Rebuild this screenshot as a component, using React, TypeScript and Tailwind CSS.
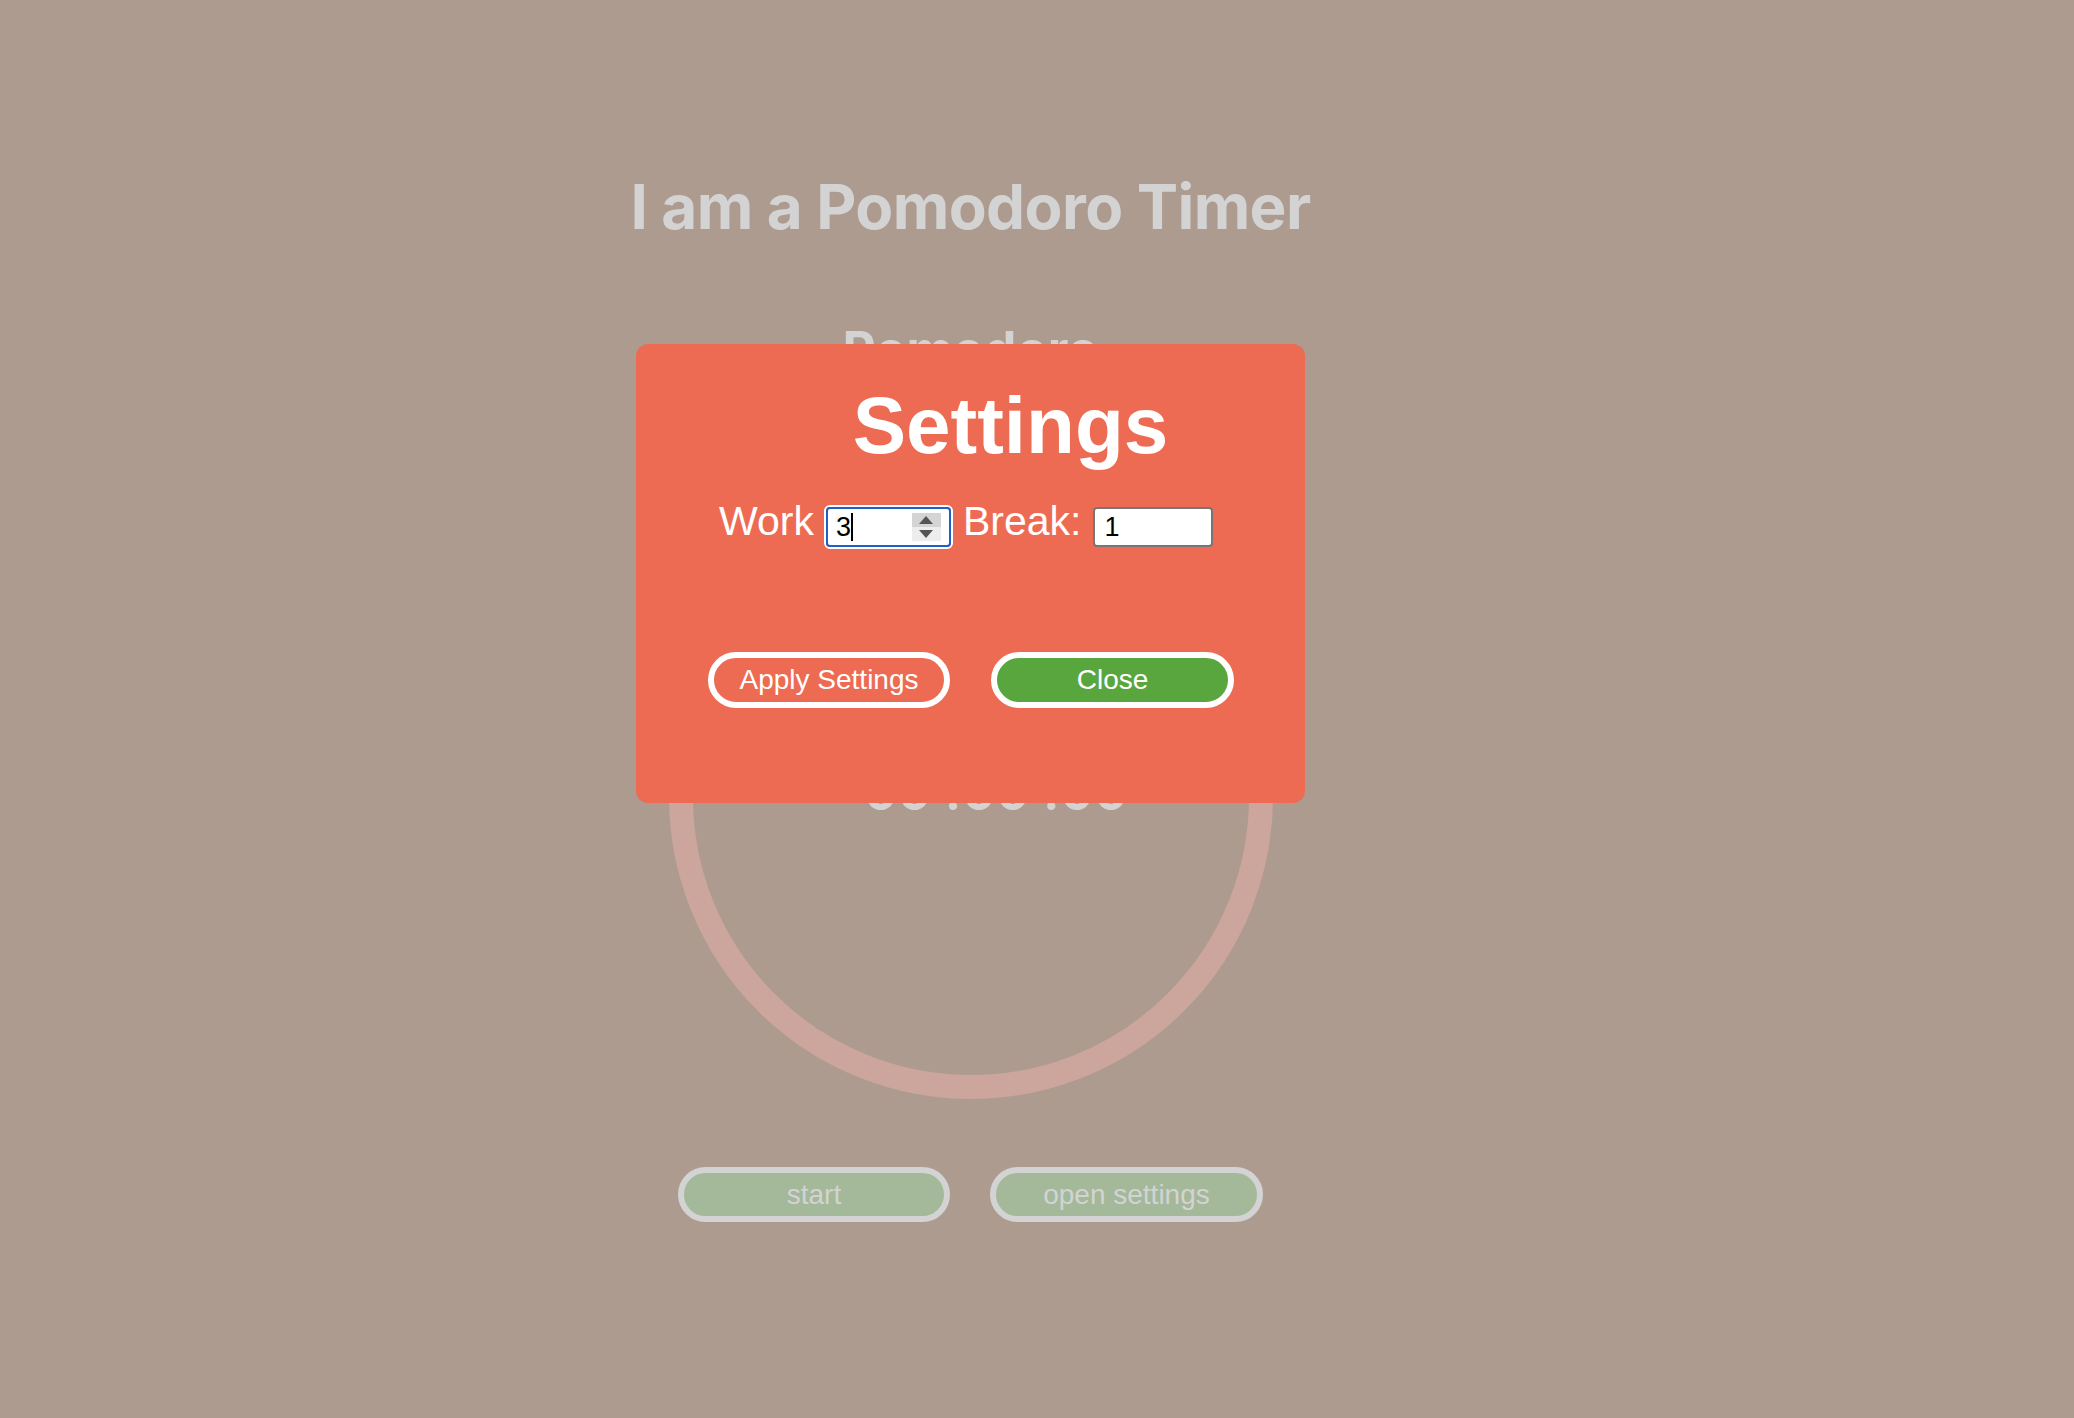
import React from 'react';

const SpinnerBox: React.FC = () => (
  <div className="flex flex-col w-[29px] h-[28px] mr-[8px]">
    <div className="flex-1 bg-[#d4d4d4] flex items-center justify-center">
      <svg width="14" height="8" viewBox="0 0 14 8">
        <path d="M7 0 L14 8 L0 8 Z" fill="#555" />
      </svg>
    </div>
    <div className="flex-1 bg-[#ededed] flex items-center justify-center">
      <svg width="14" height="8" viewBox="0 0 14 8">
        <path d="M0 0 L14 0 L7 8 Z" fill="#555" />
      </svg>
    </div>
  </div>
);

export default function App() {
  return (
    <div className="relative w-full h-[1418px] bg-[#ad9b90] overflow-hidden">
      {/* Background timer page */}
      <div className="w-[1941px] flex flex-col items-center" style={{ fontFamily: 'Inter, "Liberation Sans", sans-serif' }}>
        <h1 className="mt-[176px] text-[62px] leading-none font-bold text-[#d3d3d3] tracking-[-0.6px]">
          I am a Pomodoro Timer
        </h1>
        <h2 className="mt-[86px] text-[51px] leading-none font-bold text-[#d3d3d3]">Pomodoro</h2>

        <div className="mt-[120px] w-[604px] h-[604px] rounded-full border-[24px] border-[#cca59c] flex flex-col items-center">
          <div className="mt-[250px] ml-[52px] text-[48px] leading-none font-bold text-[#d3d3d3] tracking-[1.5px]">00 :00 :00</div>
        </div>

        <div className="mt-[68px] flex gap-[40px]" style={{ fontFamily: '"Liberation Sans", Arial, sans-serif' }}>
          <button className="w-[272px] h-[55px] rounded-full border-[6px] border-[#d3d3d3] bg-[#a3b99a] text-[28px] text-[#d3d3d3]">
            start
          </button>
          <button className="w-[273px] h-[55px] rounded-full border-[6px] border-[#d3d3d3] bg-[#a3b99a] text-[28px] text-[#d3d3d3]">
            open settings
          </button>
        </div>
      </div>

      {/* Settings modal */}
      <div
        className="absolute left-[636px] top-[344px] w-[669px] h-[459px] rounded-[12px] bg-[#ee6b53] text-white"
        style={{ fontFamily: '"Liberation Sans", Arial, sans-serif' }}
      >
        <h2 className="mt-[42px] pl-[80px] text-center text-[80px] leading-none font-bold">Settings</h2>

        <div className="mt-[35px] pl-[83px] flex items-start text-[41px] leading-none">
          <span className="h-[41px]">Work</span>
          <div className="ml-[10px] mt-[4px] rounded-[6px] border-[2px] border-white">
            <div className="w-[125px] h-[40px] rounded-[4px] border-[2px] border-[#1f5fc9] bg-white flex items-center justify-between text-black">
              <div className="flex items-center pl-[8px] text-[27px]">
                <span>3</span>
                <span className="w-[2px] h-[28px] bg-black" />
              </div>
              <SpinnerBox />
            </div>
          </div>
          <span className="ml-[10px] h-[41px]">Break:</span>
          <div className="ml-[12px] mt-[6px] w-[120px] h-[40px] rounded-[4px] border-[2px] border-[#767676] bg-white flex items-center pl-[9px] text-[27px] text-black">
            1
          </div>
        </div>

        <div className="mt-[103px] flex justify-center gap-[41px] pl-[1px]">
          <button className="w-[242px] h-[56px] rounded-full border-[6px] border-white bg-transparent text-[28px] text-white">
            Apply Settings
          </button>
          <button className="w-[243px] h-[56px] rounded-full border-[6px] border-white bg-[#59a63f] text-[28px] text-white">
            Close
          </button>
        </div>
      </div>
    </div>
  );
}
